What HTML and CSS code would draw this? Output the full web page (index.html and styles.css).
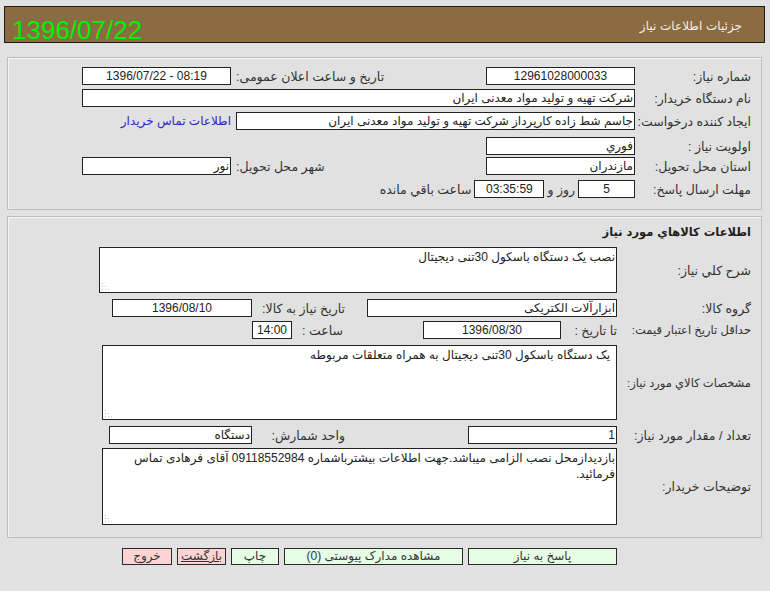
FILE: index.html
```html
<!DOCTYPE html>
<html lang="fa" dir="rtl">
<head>
<meta charset="utf-8">
<title>جزئیات اطلاعات نیاز</title>
<link rel="stylesheet" href="styles.css">
</head>
<body>
<div class="header">
  <div class="title">جزئیات اطلاعات نیاز</div>
  <div class="date">1396/07/22</div>
</div>

<div class="panel p1">
  <div class="row">
    <div class="lbl">شماره نیاز:</div>
    <div class="box c w149">12961028000033</div>
    <div class="mlbl w255">تاریخ و ساعت اعلان عمومی:</div>
    <div class="box c w149 ltr">1396/07/22 - 08:19</div>
  </div>
  <div class="row g4">
    <div class="lbl">نام دستگاه خریدار:</div>
    <div class="box w553">شرکت تهیه و تولید مواد معدنی ایران</div>
  </div>
  <div class="row g5">
    <div class="lbl">ایجاد کننده درخواست:</div>
    <div class="box w399">جاسم شط زاده کارپرداز شرکت تهیه و تولید مواد معدنی ایران</div>
    <a class="link">اطلاعات تماس خریدار</a>
  </div>
  <div class="row g7">
    <div class="lbl">اولویت نیاز :</div>
    <div class="box w149">فوري</div>
  </div>
  <div class="row g2">
    <div class="lbl">استان محل تحویل:</div>
    <div class="box w149">مازندران</div>
    <div class="mlbl w255">شهر محل تحویل:</div>
    <div class="box w149">نور</div>
  </div>
  <div class="row g5">
    <div class="lbl">مهلت ارسال پاسخ:</div>
    <div class="box c w57">5</div>
    <span class="txt">روز و</span>
    <div class="box c w70">03:35:59</div>
    <span class="txt">ساعت باقي مانده</span>
  </div>
</div>

<div class="panel p2">
  <div class="sec-title">اطلاعات کالاهاي مورد نیاز</div>
  <div class="row h46">
    <div class="lbl">شرح کلي نیاز:</div>
    <div class="ta w518">نصب یک دستگاه باسکول 30تنی دیجیتال<svg class="grip" width="7" height="7" viewBox="0 0 7 7"><g fill="#c4c4c4"><rect x="0" y="0" width="1" height="1"/><rect x="0" y="3" width="1" height="1"/><rect x="0" y="6" width="1" height="1"/><rect x="3" y="3" width="1" height="1"/><rect x="3" y="6" width="1" height="1"/><rect x="6" y="6" width="1" height="1"/></g></svg></div>
  </div>
  <div class="row g6">
    <div class="lbl">گروه کالا:</div>
    <div class="box w250">ابزارآلات الکتریکی</div>
    <div class="mlbl2 w115">تاریخ نیاز به کالا:</div>
    <div class="box c w140">1396/08/10</div>
  </div>
  <div class="row g4">
    <div class="lbl sm">حداقل تاریخ اعتبار قیمت:</div>
    <span class="txt0 w56">تا تاریخ :</span>
    <div class="box c w138">1396/08/30</div>
    <div class="mlbl3 w131">ساعت :</div>
    <div class="box c w40">14:00</div>
  </div>
  <div class="row h75 g6">
    <div class="lbl sm">مشخصات کالاي مورد نیاز:</div>
    <div class="ta w515 indent">یک دستگاه باسکول 30تنی دیجیتال به همراه متعلقات مربوطه<svg class="grip" width="7" height="7" viewBox="0 0 7 7"><g fill="#c4c4c4"><rect x="0" y="0" width="1" height="1"/><rect x="0" y="3" width="1" height="1"/><rect x="0" y="6" width="1" height="1"/><rect x="3" y="3" width="1" height="1"/><rect x="3" y="6" width="1" height="1"/><rect x="6" y="6" width="1" height="1"/></g></svg></div>
  </div>
  <div class="row g6">
    <div class="lbl">تعداد / مقدار مورد نیاز:</div>
    <div class="box w149">1</div>
    <div class="mlbl4 w216">واحد شمارش:</div>
    <div class="box w143">دستگاه</div>
  </div>
  <div class="row h77 g4">
    <div class="lbl">توضیحات خریدار:</div>
    <div class="ta w515">بازدیدازمحل نصب الزامی میباشد.جهت اطلاعات بیشترباشماره 09118552984 آقای فرهادی تماس<br>فرمائید.<svg class="grip" width="7" height="7" viewBox="0 0 7 7"><g fill="#c4c4c4"><rect x="0" y="0" width="1" height="1"/><rect x="0" y="3" width="1" height="1"/><rect x="0" y="6" width="1" height="1"/><rect x="3" y="3" width="1" height="1"/><rect x="3" y="6" width="1" height="1"/><rect x="6" y="6" width="1" height="1"/></g></svg></div>
  </div>
</div>

<div class="buttons">
  <div class="btn green w149">پاسخ به نیاز</div>
  <div class="btn green w179">مشاهده مدارک پیوستی (0)</div>
  <div class="btn green w48">چاپ</div>
  <div class="btn pink w49 ul">بازگشت</div>
  <div class="btn pink w50">خروج</div>
</div>
</body>
</html>
```

FILE: styles.css
```css
* { box-sizing: border-box; }

body {
  margin: 0;
  background: #e1e1e1;
  font-family: "Liberation Sans", "DejaVu Sans", sans-serif;
  font-size: 12px;
  color: #2a2a2a;
  direction: rtl;
}

.header {
  margin: 6px 5px 0 4px;
  height: 37px;
  background: #8b6b41;
  border: 1px solid #1c1c1c;
  display: flex;
  justify-content: space-between;
  align-items: center;
  padding: 0 22px 0 7px;
}

.title {
  color: #f3efe8;
  font-family: "DejaVu Sans", sans-serif;
  font-size: 12px;
  padding-top: 2px;
}

.date {
  align-self: flex-end;
  font-family: "Liberation Sans", sans-serif;
  font-size: 26px;
  line-height: 24px;
  color: #00f000;
  direction: ltr;
}

.panel {
  margin: 0 8px 0 7px;
  border: 1px solid #bdbdbd;
  box-shadow: inset 1px 1px 0 #f5f5f5;
}

.p1 {
  margin-top: 14px;
  padding: 9px 0 11px 0;
}

.p2 {
  margin-top: 6px;
  padding: 7px 0 12px 0;
}

.row {
  display: flex;
  align-items: center;
  height: 18px;
}

.h46 { height: 46px; }
.h75 { height: 75px; }
.h77 { height: 77px; }

.g2 { margin-top: 2px; }
.g4 { margin-top: 4px; }
.g5 { margin-top: 5px; }
.g6 { margin-top: 6px; }
.g7 { margin-top: 7px; }

.lbl,
.mlbl,
.mlbl2,
.mlbl3,
.mlbl4,
.txt,
.txt0 {
  font-size: 12.5px;
  color: #333;
}

.lbl {
  flex: none;
  width: 126px;
  padding-right: 10px;
  white-space: nowrap;
}

.p2 .lbl { width: 144px; }
.p2 .lbl.sm { font-size: 11.5px; }

.box {
  flex: none;
  height: 18px;
  background: #fff;
  border: 1px solid #222;
  line-height: 16px;
  padding: 0 1px;
  white-space: nowrap;
  overflow: hidden;
  color: #222;
}

.c { text-align: center; }
.ltr { direction: ltr; }

.mlbl {
  flex: none;
  text-align: left;
  padding-left: 5px;
  white-space: nowrap;
}

.mlbl2 { flex: none; padding-right: 22px; white-space: nowrap; }
.mlbl3 { flex: none; padding-right: 80px; white-space: nowrap; }
.mlbl4 { flex: none; padding-right: 123px; white-space: nowrap; }

.txt { margin: 0 3px; white-space: nowrap; }
.txt0 { flex: none; white-space: nowrap; }

.link {
  margin-right: 5px;
  color: #2828c4;
  white-space: nowrap;
  cursor: pointer;
}

.sec-title {
  font-family: "DejaVu Sans", sans-serif;
  font-weight: bold;
  font-size: 11.5px;
  line-height: 16px;
  height: 16px;
  padding-right: 10px;
  margin-bottom: 7px;
  color: #1e1e1e;
}

.ta {
  flex: none;
  align-self: stretch;
  position: relative;
  background: #fff;
  border: 1px solid #222;
  padding: 1px 1px;
  line-height: 16px;
  color: #222;
}

.indent { padding-right: 6px; }

.grip {
  position: absolute;
  left: 2px;
  bottom: 2px;
}

.w40 { width: 40px; }
.w48 { width: 48px; }
.w49 { width: 49px; }
.w50 { width: 50px; }
.w56 { width: 56px; }
.w57 { width: 57px; }
.w70 { width: 70px; }
.w115 { width: 115px; }
.w131 { width: 131px; }
.w138 { width: 138px; }
.w140 { width: 140px; }
.w143 { width: 143px; }
.w149 { width: 149px; }
.w179 { width: 179px; }
.w216 { width: 216px; }
.w250 { width: 250px; }
.w255 { width: 255px; }
.w399 { width: 399px; }
.w515 { width: 515px; }
.w518 { width: 518px; }
.w553 { width: 553px; }

.buttons {
  display: flex;
  gap: 5px;
  margin: 10px 153px 0 0;
}

.btn {
  flex: none;
  height: 17px;
  line-height: 15px;
  border: 1px solid #2a2a2a;
  text-align: center;
  color: #333;
  white-space: nowrap;
}

.green { background: #e8fde6; }
.pink { background: #fdd3d3; }
.ul { text-decoration: underline; }
```
